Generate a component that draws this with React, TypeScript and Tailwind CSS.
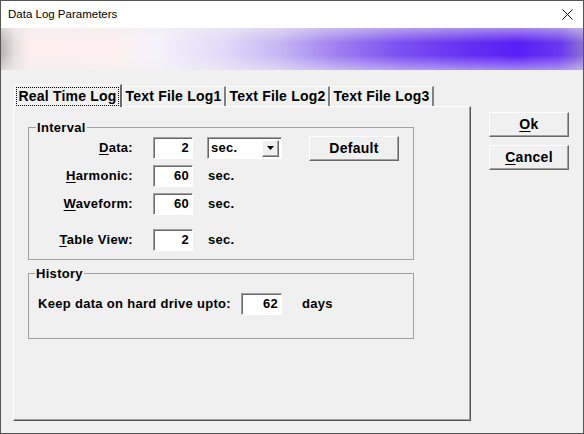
import React from 'react';

const sunken =
  'border border-t-[#a0a0a0] border-l-[#a0a0a0] border-r-white border-b-white shadow-[inset_1px_1px_0_#696969] bg-white';
const raised =
  'border border-t-white border-l-white border-r-[#696969] border-b-[#696969] shadow-[inset_-1px_-1px_0_#a0a0a0] bg-[#f0f0f0]';

const Field: React.FC<{ value: string; className?: string }> = ({ value, className = 'w-[40px]' }) => (
  <div className={`${sunken} ${className} h-[22px] flex items-center justify-end pr-[3px] font-bold text-[13px] tracking-[0.3px]`}>
    {value}
  </div>
);

const Label: React.FC<{ k: string; rest: string }> = ({ k, rest }) => (
  <div className="w-[104px] text-right font-bold text-[13px] tracking-[0.3px] whitespace-nowrap">
    <span className="underline underline-offset-2">{k}</span>
    {rest}
  </div>
);

const Tab: React.FC<{ label: string; active?: boolean }> = ({ label, active }) =>
  active ? (
    <div className="relative z-10 -mb-px h-[23px] w-[108px] bg-[#f0f0f0] border-t border-l border-t-white border-l-white border-r-2 border-r-[#696969] flex items-center px-[1px]">
      <div className="w-full h-[19px] border border-dotted border-black flex items-center justify-center font-bold text-[14px] tracking-[0.2px] whitespace-nowrap">
        {label}
      </div>
    </div>
  ) : (
    <div className="h-[20px] w-[104px] border-t border-l border-t-white border-l-white border-r-2 border-r-[#808080] flex items-center justify-center font-bold text-[14px] tracking-[0.2px] whitespace-nowrap">
      {label}
    </div>
  );

const Button: React.FC<{ children: React.ReactNode; className?: string }> = ({ children, className = '' }) => (
  <div className={`${raised} ${className} flex items-center justify-center font-bold text-[14px] tracking-[0.3px]`}>{children}</div>
);

export default function App() {
  return (
    <div className="w-[584px] h-[434px] border border-[#555555] bg-[#f0f0f0] flex flex-col text-black font-['Liberation_Sans',Arial,sans-serif] select-none">
      {/* title bar */}
      <div className="h-[27px] bg-white flex items-center justify-between pl-[7px] pr-[9px]">
        <span className="text-[11.5px]">Data Log Parameters</span>
        <svg width="11" height="11" viewBox="0 0 11 11" className="mr-[1px]">
          <path d="M0.5 0.5 L10.5 10.5 M10.5 0.5 L0.5 10.5" stroke="#111" strokeWidth="1" />
        </svg>
      </div>

      {/* banner */}
      <div className="h-[42px] bg-[linear-gradient(to_right,#bcb6b2_0%,#e8e2e0_2.5%,#fcefee_5%,#fcf0f0_20%,#f4f2fb_27%,#e2daf9_38%,#c6b6f4_48%,#9e7ef1_58%,#7c52f1_68%,#6530f3_80%,#5a1ef6_89%,#6a38f0_96%,#8a70d8_100%)]">
        <div className="h-full w-full bg-[linear-gradient(to_bottom,rgba(240,240,240,0.5)_0%,rgba(255,255,255,0)_35%,rgba(255,255,255,0)_65%,rgba(240,240,240,0.5)_100%)]" />
      </div>

      {/* body */}
      <div className="flex-1 flex pl-[12px] pt-[14px]">
        <div className="flex flex-col w-[458px]">
          <div className="flex items-end pl-px">
            <Tab label="Real Time Log" active />
            <Tab label="Text File Log1" />
            <Tab label="Text File Log2" />
            <Tab label="Text File Log3" />
          </div>
          <div className="h-[315px] border-t border-l border-t-white border-l-white border-r border-b border-r-[#555555] border-b-[#555555] shadow-[inset_-1px_-1px_0_#a0a0a0] pt-[13px] pl-[14px]">
            <fieldset className="w-[386px] border border-[#a0a0a0] pt-[2px] pb-[8px]">
              <legend className="ml-[7px] px-px font-bold text-[13px] leading-[15px] tracking-[0.3px]">Interval</legend>
              <div className="flex items-center h-[22px]">
                <Label k="D" rest="ata:" />
                <Field value="2" className="ml-[20px] w-[40px]" />
                <div className={`${sunken} ml-[14px] w-[75px] h-[22px] flex items-center justify-between pl-[3px] pr-[2px]`}>
                  <span className="font-bold text-[13px] tracking-[0.3px]">sec.</span>
                  <div className={`${raised} w-[17px] h-[17px] flex items-center justify-center`}>
                    <svg width="7" height="4" viewBox="0 0 7 4">
                      <path d="M0 0 H7 L3.5 4 Z" fill="#000" />
                    </svg>
                  </div>
                </div>
                <Button className="ml-[27px] w-[90px] h-[25px]">Default</Button>
              </div>
              <div className="flex items-center h-[22px] mt-[6px]">
                <Label k="H" rest="armonic:" />
                <Field value="60" className="ml-[20px] w-[40px]" />
                <span className="ml-[15px] font-bold text-[13px] tracking-[0.3px]">sec.</span>
              </div>
              <div className="flex items-center h-[22px] mt-[6px]">
                <Label k="W" rest="aveform:" />
                <Field value="60" className="ml-[20px] w-[40px]" />
                <span className="ml-[15px] font-bold text-[13px] tracking-[0.3px]">sec.</span>
              </div>
              <div className="flex items-center h-[22px] mt-[14px]">
                <Label k="T" rest="able View:" />
                <Field value="2" className="ml-[20px] w-[40px]" />
                <span className="ml-[15px] font-bold text-[13px] tracking-[0.3px]">sec.</span>
              </div>
            </fieldset>

            <fieldset className="mt-[6px] w-[386px] border border-[#a0a0a0] pt-[12px] pb-[23px]">
              <legend className="ml-[6px] px-px font-bold text-[13px] leading-[15px] tracking-[0.3px]">History</legend>
              <div className="flex items-center h-[22px] pl-[9px]">
                <span className="font-bold text-[13px] tracking-[0.3px] w-[203px] whitespace-nowrap">Keep data on hard drive upto:</span>
                <Field value="62" className="w-[41px]" />
                <span className="ml-[20px] font-bold text-[13px] tracking-[0.3px]">days</span>
              </div>
            </fieldset>
          </div>
        </div>

        <div className="flex flex-col ml-[18px] pt-[28px] gap-[8px]">
          <Button className="w-[80px] h-[25px]">
            <span className="underline underline-offset-2">O</span>k
          </Button>
          <Button className="w-[80px] h-[25px]">
            <span className="underline underline-offset-2">C</span>ancel
          </Button>
        </div>
      </div>
    </div>
  );
}
